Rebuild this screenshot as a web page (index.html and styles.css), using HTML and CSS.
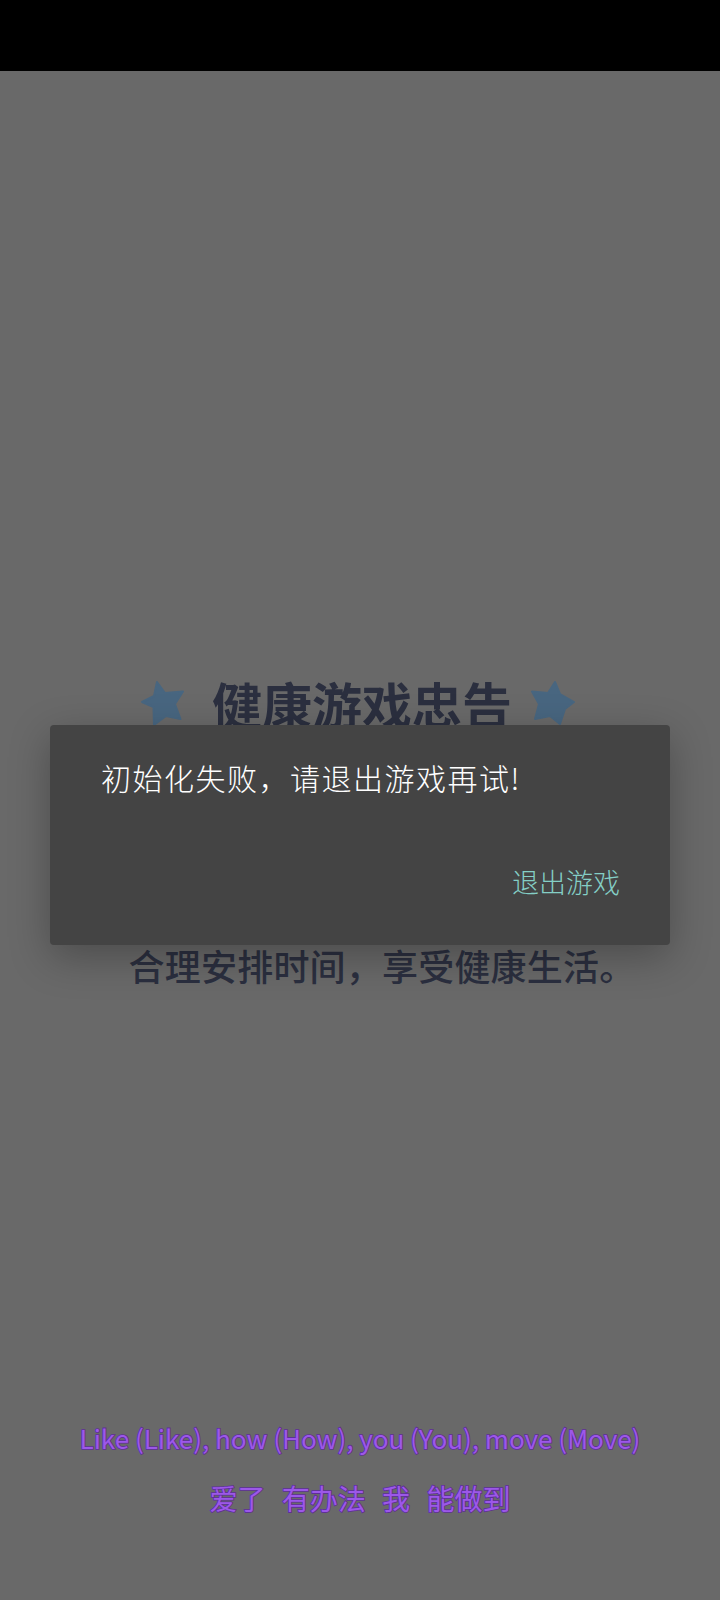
FILE: index.html
```html
<!DOCTYPE html>
<html lang="zh-CN">
<head>
<meta charset="utf-8">
<title>初始化失败</title>
<link rel="stylesheet" href="styles.css">
</head>
<body>
<div class="page">
  <div class="topbar"></div>
  <main class="stage">
    <section class="advice">
      <div class="advice-title">
        <svg class="star" viewBox="0 0 46 48"><path d="M17 3 L25 14 L43 12.500 L35 25 L40.500 40 L26 37 L14 46 L13.500 28 L2 23 L14 17 Z"/></svg>
        <h1 class="advice-heading">健康游戏忠告</h1>
        <svg class="star" viewBox="0 0 46 48"><path d="M25 3 L30 15 L44 23 L35 30 L30 45 L20 37 L5 40 L9 25 L2 12.500 L18 14 Z"/></svg>
      </div>
      <p class="advice-line">合理安排时间，享受健康生活。</p>
    </section>
    <section class="lyrics">
      <p class="lyric-line">Like (Like), how (How), you (You), move (Move)</p>
      <p class="lyric-line lyric-cn">爱了 有办法 我 能做到</p>
    </section>
  </main>
  <div class="dialog">
    <p class="dialog-message">初始化失败，请退出游戏再试!</p>
    <div class="dialog-actions"><span class="dialog-button">退出游戏</span></div>
  </div>
</div>
</body>
</html>
```
FILE: styles.css
```css
* { box-sizing: border-box; }
html, body { margin: 0; padding: 0; }
body { font-family: "Noto Sans CJK SC", "Noto Sans", sans-serif; background: #696969; }
.page { position: relative; width: 720px; height: 1600px; display: flex; flex-direction: column; overflow: hidden; }
.topbar { height: 71px; background: #000; flex: none; }
.stage { flex: 1; display: flex; flex-direction: column; background: #696969; padding-top: 602px; }
.advice { display: flex; flex-direction: column; align-items: center; }
.advice-title { display: flex; align-items: center; justify-content: center; gap: 18px; height: 60px; padding-right: 4px; }
.advice-heading { margin: 0 0 0 8px; font-size: 50px; line-height: 60px; font-weight: 700; color: #2b2f3f; white-space: nowrap; }
.star { width: 46px; height: 48px; flex: none; }
.star path { fill: #486680; stroke: #486680; stroke-width: 2; stroke-linejoin: round; }
.advice-line { margin: 208px 0 0 44px; font-size: 36px; line-height: 48px; font-weight: 500; letter-spacing: 0.2px; color: #2b2f3f; white-space: nowrap; }
.lyrics { margin-top: auto; padding-bottom: 82px; display: flex; flex-direction: column; align-items: center; gap: 20px; }
.lyric-line { margin: 0; font-size: 26px; line-height: 40px; color: #9c58e8; -webkit-text-stroke: 1.6px #5e2f99; paint-order: stroke fill; white-space: nowrap; }
.lyric-cn { font-size: 28px; word-spacing: 10px; }
.dialog { position: absolute; left: 50px; top: 725px; width: 620px; height: 220px; background: #444; border-radius: 4px; box-shadow: 0 12px 40px rgba(0, 0, 0, .28); padding: 29px 50px 43px 51px; display: flex; flex-direction: column; justify-content: space-between; }
.dialog-message { margin: 0; font-size: 30px; line-height: 46px; font-weight: 300; letter-spacing: 1.5px; color: #fff; white-space: nowrap; }
.dialog-actions { display: flex; justify-content: flex-end; }
.dialog-button { font-size: 27px; line-height: 40px; font-weight: 300; color: #84cfc6; }
```
